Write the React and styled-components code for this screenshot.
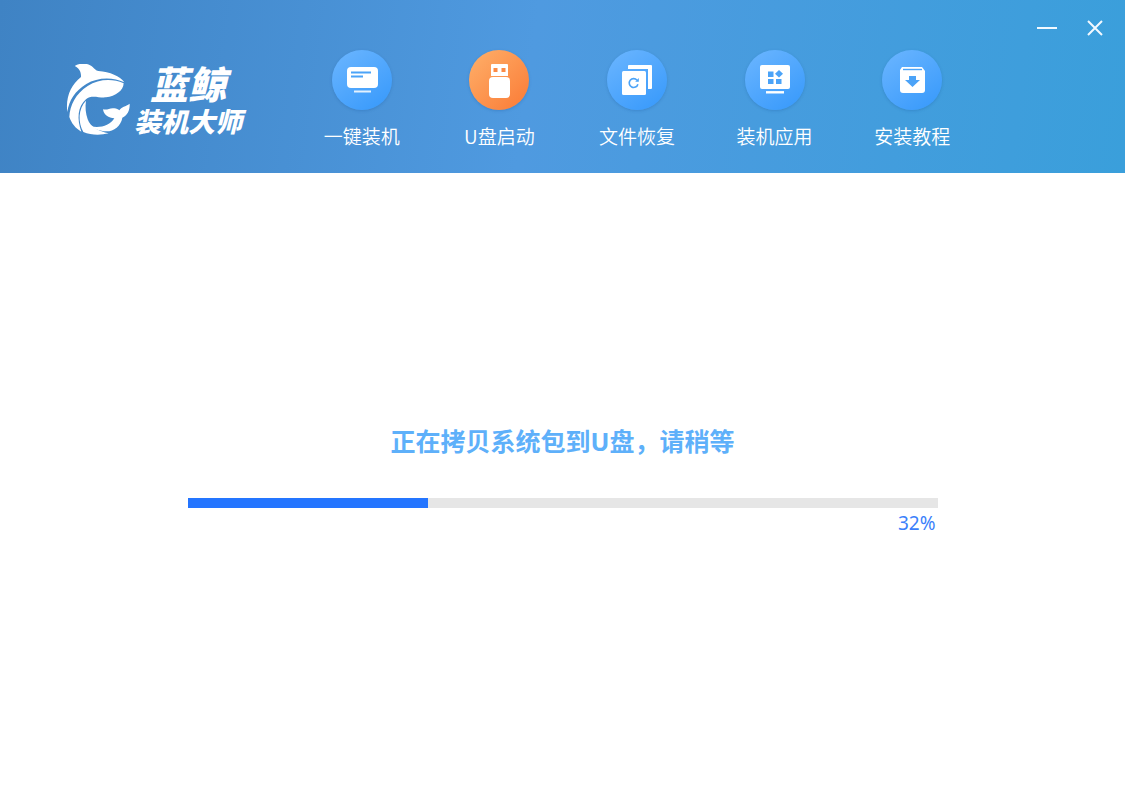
import { useState } from 'react';
import styled, { createGlobalStyle } from 'styled-components';

const GlobalStyle = createGlobalStyle`
  * {
    box-sizing: border-box;
  }

  body {
    margin: 0;
    background: #fff;
    font-family: 'Noto Sans', 'Noto Sans CJK SC', sans-serif;
  }
`;

const Window = styled.div`
  display: flex;
  flex-direction: column;
  min-height: 100vh;
`;

const Header = styled.header`
  display: flex;
  align-items: flex-start;
  padding: 0 18px 24px 66px;
  background: linear-gradient(98deg, #3f83c4 0%, #4f9ae0 47%, #3a9fdb 100%);
`;

const Brand = styled.a`
  display: flex;
  flex: 0 0 227px;
  gap: 2px;
  padding-top: 64px;
  color: #fff;
  text-decoration: none;
`;

const BrandText = styled.span`
  display: flex;
  flex-direction: column;
  align-items: center;
  font-family: 'Noto Sans CJK SC', sans-serif;
  font-style: italic;
  font-weight: 900;
  white-space: nowrap;
`;

const BrandName = styled.span`
  font-size: 38px;
  line-height: 38px;
`;

const BrandTitle = styled.span`
  font-size: 27px;
  line-height: 38px;
`;

const Nav = styled.nav`
  display: flex;
  flex: 0 1 688px;
  padding-top: 50px;
`;

const NavButton = styled.button`
  display: flex;
  flex: 1;
  flex-direction: column;
  align-items: center;
  gap: 13px;
  padding: 0;
  border: 0;
  background: none;
  color: #fff;
  font-family: 'Noto Sans CJK SC', sans-serif;
  font-size: 19px;
  font-weight: 350;
  line-height: 26px;
  white-space: nowrap;
  cursor: pointer;
`;

const NavIcon = styled.span`
  display: flex;
  width: 60px;
  height: 60px;
  border-radius: 50%;
  color: ${({ $active }) => ($active ? '#fb8a45' : '#4ba3f8')};
  background: ${({ $active }) =>
    $active
      ? 'linear-gradient(135deg, #ffb06a, #fa7a35)'
      : 'linear-gradient(145deg, #6cb6ff, #3598fb)'};
  box-shadow: 0 1px 3px rgba(30, 90, 160, 0.3);
`;

const Controls = styled.div`
  display: flex;
  gap: 24px;
  margin-left: auto;
  padding-top: 16px;
`;

const ControlButton = styled.button`
  display: flex;
  padding: 0;
  border: 0;
  background: none;
  color: #f2f9ff;
  cursor: pointer;
`;

const Main = styled.main`
  display: grid;
  grid-template-columns: 1fr 4fr 1fr;
  padding-top: 250px;
`;

const Status = styled.section`
  display: flex;
  flex-direction: column;
  grid-column: 2;
`;

const StatusTitle = styled.h1`
  margin: 0 0 39px;
  color: #5eb0fa;
  font-size: 25px;
  font-weight: 700;
  line-height: 36px;
  text-align: center;
`;

const Track = styled.div`
  height: 10px;
  background: #e6e6e6;
`;

const Bar = styled.div`
  height: 100%;
  background: #2475ff;
`;

const Percent = styled.span`
  align-self: flex-end;
  padding: 2px 2px 0 0;
  color: #3b7ffb;
  font-size: 19px;
  line-height: 26px;
`;

const Whale = () => (
  <svg width="66" height="75" viewBox="19 18 198 225" fill="currentColor" aria-hidden="true">
    <path d="M23 162C17 118 34 80 64 57C65 42 58 30 45 24C62 13 87 15 99 27C106 33 108 38 116 39C151 42 181 54 194 73C159 56 112 58 80 78C46 99 28 127 23 162Z" />
    <path d="M192 76C158 61 117 63 84 84C48 107 31 142 29 177C35 195 47 211 65 221C51 183 54 145 79 124C95 109 116 120 139 118C168 115 191 98 192 76Z" />
    <path d="M79 128C55 153 55 192 71 222C94 232 123 232 147 226C118 220 92 207 84 184C78 166 76 147 79 128Z" />
    <path d="M130 154C145 157 149 149 164 151C171 152 175 154 179 157C185 147 198 145 210 137C211 156 203 173 188 179C184 204 161 221 139 220C121 220 104 213 94 205C121 212 151 202 164 181C147 181 132 170 130 154Z" />
  </svg>
);

const icons = {
  install: (
    <>
      <rect x="15" y="17" width="31" height="21" rx="4" fill="#fff" />
      <path d="M19 22.5h20M19 26.5h12" stroke="currentColor" strokeWidth="2" />
      <path d="M22 41.5h17" stroke="#fff" strokeWidth="2" opacity=".85" />
    </>
  ),
  usb: (
    <>
      <path d="M23 14h15a1 1 0 0 1 1 1v11H22V15a1 1 0 0 1 1-1Z" fill="#fff" />
      <rect x="20" y="27" width="21" height="21" rx="4" fill="#fff" />
      <path d="M24.5 18h4v4h-4ZM32.5 18h4v4h-4Z" fill="currentColor" />
    </>
  ),
  restore: (
    <>
      <path d="M22 15h22a1 1 0 0 1 1 1v22a1 1 0 0 1-1 1h-3V19H21v-3a1 1 0 0 1 1-1Z" fill="#fff" />
      <rect x="15" y="21" width="24" height="24" rx="1.5" fill="#fff" />
      <path
        d="M30 30.2a4.4 4.4 0 1 0 .9 4"
        fill="none"
        stroke="currentColor"
        strokeWidth="1.6"
      />
      <path d="M28.2 31.8h3.6v-3.8Z" fill="currentColor" />
    </>
  ),
  apps: (
    <>
      <rect x="15" y="15" width="30" height="24" rx="2" fill="#fff" />
      <path d="M23 21.5h5.5V27H23ZM23 29h5.5v5H23ZM31 29h5.5v5H31Z" fill="currentColor" />
      <path d="M34 20l4 3.8-4 3.8-4-3.8Z" fill="currentColor" />
      <path d="M21 42.3h18" stroke="#fff" strokeWidth="2.4" />
    </>
  ),
  tutorial: (
    <>
      <path d="M20 17h20l3 4v19a3 3 0 0 1-3 3H21a3 3 0 0 1-3-3V20Z" fill="#fff" />
      <path d="M21 19.5h19" stroke="currentColor" strokeWidth="1.4" />
      <path d="M27 26h7v4h4l-7.5 7L23 30h4Z" fill="currentColor" />
    </>
  ),
};

const navItems = [
  { id: 'install', label: '一键装机' },
  { id: 'usb', label: 'U盘启动' },
  { id: 'restore', label: '文件恢复' },
  { id: 'apps', label: '装机应用' },
  { id: 'tutorial', label: '安装教程' },
];

const NavItem = ({ id, label, active, onClick }) => (
  <NavButton type="button" aria-current={active ? 'page' : undefined} onClick={onClick}>
    <NavIcon $active={active}>
      <svg width="60" height="60" viewBox="0 0 60 60" aria-hidden="true">
        {icons[id]}
      </svg>
    </NavIcon>
    {label}
  </NavButton>
);

const CopyProgress = ({ value }) => (
  <Status>
    <StatusTitle id="copy-status">正在拷贝系统包到U盘，请稍等</StatusTitle>
    <Track
      role="progressbar"
      aria-labelledby="copy-status"
      aria-valuemin={0}
      aria-valuemax={100}
      aria-valuenow={value}
    >
      <Bar style={{ width: `${value}%` }} />
    </Track>
    <Percent>{value}%</Percent>
  </Status>
);

const App = () => {
  const [current, setCurrent] = useState('usb');

  return (
    <Window>
      <GlobalStyle />
      <Header>
        <Brand href="#">
          <Whale />
          <BrandText>
            <BrandName>蓝鲸</BrandName>
            <BrandTitle>装机大师</BrandTitle>
          </BrandText>
        </Brand>
        <Nav>
          {navItems.map(({ id, label }) => (
            <NavItem
              key={id}
              id={id}
              label={label}
              active={id === current}
              onClick={() => setCurrent(id)}
            />
          ))}
        </Nav>
        <Controls>
          <ControlButton type="button" aria-label="最小化">
            <svg width="24" height="24" viewBox="0 0 24 24" aria-hidden="true">
              <path d="M2 12h20" stroke="currentColor" strokeWidth="2" />
            </svg>
          </ControlButton>
          <ControlButton type="button" aria-label="关闭">
            <svg width="24" height="24" viewBox="0 0 24 24" aria-hidden="true">
              <path d="M5 5l14 14M19 5L5 19" stroke="currentColor" strokeWidth="2" />
            </svg>
          </ControlButton>
        </Controls>
      </Header>
      <Main>
        <CopyProgress value={32} />
      </Main>
    </Window>
  );
};

export default App;
